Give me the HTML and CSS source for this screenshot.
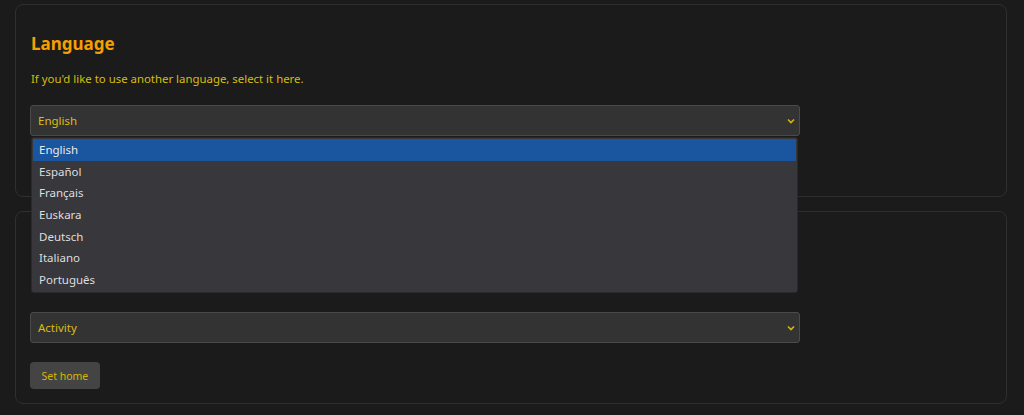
FILE: index.html
```html
<!DOCTYPE html>
<html lang="en">
<head>
<meta charset="utf-8">
<title>Settings</title>
<link rel="stylesheet" href="styles.css">
</head>
<body>
<main class="page">
  <section class="card card-lang">
    <h2 class="card-title">Language</h2>
    <p class="card-desc">If you'd like to use another language, select it here.</p>
    <div class="select-wrap">
      <div class="select">
        <span class="select-value">English</span>
        <svg class="chev" width="8" height="6" viewBox="0 0 8 6"><path d="M1 1.5 L4 4.5 L7 1.5" fill="none" stroke="#d9b800" stroke-width="1.6"/></svg>
      </div>
      <ul class="dropdown">
        <li class="opt selected">English</li>
        <li class="opt">Español</li>
        <li class="opt">Français</li>
        <li class="opt">Euskara</li>
        <li class="opt">Deutsch</li>
        <li class="opt">Italiano</li>
        <li class="opt">Português</li>
      </ul>
    </div>
  </section>
  <section class="card card-home">
    <div class="select-wrap">
      <div class="select">
        <span class="select-value">Activity</span>
        <svg class="chev" width="8" height="6" viewBox="0 0 8 6"><path d="M1 1.5 L4 4.5 L7 1.5" fill="none" stroke="#d9b800" stroke-width="1.6"/></svg>
      </div>
    </div>
    <button class="btn">Set home</button>
  </section>
</main>
</body>
</html>
```
FILE: styles.css
```css
html, body {
  margin: 0;
  padding: 0;
  background: #1b1b1b;
}
body {
  font-family: "Noto Sans", "Open Sans", sans-serif;
  height: 415px;
  overflow: hidden;
}
.page {
  display: flex;
  flex-direction: column;
  gap: 14px;
  padding: 4px 17px 0 15px;
}
.card {
  border: 1px solid #2f2f2f;
  border-radius: 8px;
  background: #1b1b1b;
  padding: 27px 14px 14px 14px;
  display: flex;
  flex-direction: column;
  align-items: flex-start;
}
.card-lang {
  padding-bottom: 60px;
}
.card-home {
  padding-top: 100px;
}
.card-title {
  margin: 0;
  padding-left: 1px;
  font-size: 17px;
  font-weight: 700;
  color: #f59f00;
  line-height: 24px;
}
.card-desc {
  margin: 15px 0 0 1px;
  font-size: 11.4px;
  line-height: 16px;
  color: #d9bc10;
}
.select-wrap {
  position: relative;
  width: 770px;
}
.card-lang .select-wrap {
  margin-top: 18px;
}
.select {
  box-sizing: border-box;
  height: 31px;
  border: 1px solid #4a4a4a;
  border-radius: 3px;
  background: #333333;
  display: flex;
  align-items: center;
  justify-content: space-between;
  padding: 0 4px 0 7px;
}
.select-value {
  font-size: 11.5px;
  color: #dcbc10;
}
.chev {
  display: block;
}
.dropdown {
  position: absolute;
  left: 1px;
  right: 2px;
  top: 32px;
  margin: 0;
  padding: 1px;
  list-style: none;
  background: #38373c;
  border: 1px solid #2a2a2d;
  border-radius: 3px;
  box-sizing: border-box;
  z-index: 2;
}
.opt {
  height: 21.7px;
  line-height: 21.7px;
  padding-left: 6px;
  font-size: 11.5px;
  color: #dedede;
}
.opt.selected {
  background: #1a55a0;
  color: #eaeaea;
}
.btn {
  margin-top: 19px;
  height: 27px;
  padding: 0 11.5px;
  border: none;
  border-radius: 4px;
  background: #444444;
  color: #d6b600;
  font-family: "Noto Sans", "Open Sans", sans-serif;
  font-size: 10.5px;
}
```
